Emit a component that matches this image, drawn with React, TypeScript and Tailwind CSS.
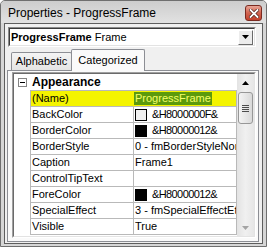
import React from 'react'

type Prop = {
    name: string
    value: string
    swatch?: 'light' | 'dark'
    selected?: boolean
}

const props: Prop[] = [
    { name: '(Name)', value: 'ProgressFrame', selected: true },
    { name: 'BackColor', value: '&H8000000F&', swatch: 'light' },
    { name: 'BorderColor', value: '&H80000012&', swatch: 'dark' },
    { name: 'BorderStyle', value: '0 - fmBorderStyleNone' },
    { name: 'Caption', value: 'Frame1' },
    { name: 'ControlTipText', value: '' },
    { name: 'ForeColor', value: '&H80000012&', swatch: 'dark' },
    { name: 'SpecialEffect', value: '3 - fmSpecialEffectEtched' },
    { name: 'Visible', value: 'True' },
]

const CloseButton = () => (
    <div className="mt-[4px] w-[17px] h-[16px] rounded-[3px] border border-[#7a2a20] bg-gradient-to-b from-[#e8a496] via-[#d0634f] to-[#c2412c] flex items-center justify-center">
        <svg width="10" height="9" viewBox="0 0 10 9">
            <path d="M1.5 1 L8.5 8 M8.5 1 L1.5 8" stroke="#4a1a14" strokeWidth="3.2" strokeLinecap="square" />
            <path d="M1.5 1 L8.5 8 M8.5 1 L1.5 8" stroke="#ffffff" strokeWidth="1.8" strokeLinecap="square" />
        </svg>
    </div>
)

const PropRow = ({ p }: { p: Prop }) => (
    <div className={`flex h-[16px] ${p.selected ? 'bg-[#f4f400]' : 'bg-white'}`}>
        <div className="w-[16px] bg-white" />
        <div className={`w-[104px] border-l border-r border-b border-[#b9b9b9] pl-[1px] leading-[15px] whitespace-nowrap overflow-hidden ${p.selected ? 'border-r-[#f4f400]' : ''}`}>
            {p.name}
        </div>
        <div className="w-[103px] border-r border-b border-[#b9b9b9] pl-[1px] flex items-center whitespace-nowrap overflow-hidden">
            {p.selected ? (
                <span className="bg-[#5c9a0c] text-[#f4ff6a] leading-[13px] px-[1px] -ml-[1px]">{p.value}</span>
            ) : (
                <>
                    {p.swatch && (
                        <span className={`w-[12px] h-[12px] border border-black mr-[5px] shrink-0 ${p.swatch === 'dark' ? 'bg-black' : 'bg-[#f0f0f0]'}`} />
                    )}
                    <span className={`leading-[15px] ${p.swatch ? 'tracking-[-0.6px]' : ''}`}>{p.value}</span>
                </>
            )}
        </div>
    </div>
)

const ScrollBar = () => (
    <div className="w-[17px] flex flex-col bg-gradient-to-r from-[#e3e3e3] via-[#f0f0f0] to-[#e6e6e6]">
        <div className="h-[17px] flex items-center justify-center">
            <svg width="7" height="4" viewBox="0 0 7 4"><path d="M3.5 0 L7 4 L0 4 Z" fill="#000" /></svg>
        </div>
        <div className="mt-[1px] mx-[1px] h-[32px] rounded-[3px] border border-[#979797] bg-gradient-to-r from-[#f4f4f4] to-[#d9d9d9] flex flex-col items-center justify-center gap-[1px]">
            {[0, 1, 2, 3].map((i) => (
                <div key={i} className="w-[7px] h-[1px] bg-[#4d4d4d]" />
            ))}
        </div>
        <div className="flex-1" />
        <div className="h-[17px] flex items-center justify-center">
            <svg width="7" height="4" viewBox="0 0 7 4"><path d="M0 0 L7 0 L3.5 4 Z" fill="#a3a3a3" /></svg>
        </div>
    </div>
)

export default function App() {
    return (
        <div className="w-[267px] h-[250px] bg-white overflow-hidden font-['Liberation_Sans',Arial,sans-serif] text-black">
            <div className="w-[267px] h-[247px] border border-[#6f6f6f] rounded-t-[5px] bg-[#d6d6d6] flex flex-col">
                {/* title bar */}
                <div className="h-[22px] flex items-start pl-[7px] pr-[4px] bg-gradient-to-b from-[#cdcdcd] to-[#e2e2e2] rounded-t-[4px]">
                    <div className="flex-1 text-[12px] leading-[22px] pt-[1px]">Properties - ProgressFrame</div>
                    <CloseButton />
                </div>

                {/* client area */}
                <div className="flex-1 px-[3px] pb-[2px]">
                    <div className="h-full border border-[#5e5e5e] bg-[#f0f0f0] flex flex-col">
                        {/* object combo */}
                        <div className="mt-[3px] ml-[3px] w-[248px] h-[20px] border border-t-[#8a8a8a] border-l-[#8a8a8a] border-r-white border-b-white">
                            <div className="h-full border border-t-[#3c3c3c] border-l-[#3c3c3c] border-r-[#e3e3e3] border-b-[#e3e3e3] bg-white flex items-center">
                                <div className="flex-1 pl-[1px] text-[11px] whitespace-nowrap">
                                    <span className="font-bold">ProgressFrame</span> Frame
                                </div>
                                <div className="w-[15px] h-[15px] mr-[1px] border border-t-white border-l-white border-r-[#6a6a6a] border-b-[#6a6a6a] bg-[#ececec] flex items-center justify-center">
                                    <svg width="7" height="4" viewBox="0 0 7 4"><path d="M0 0 L7 0 L3.5 4 Z" fill="#000" /></svg>
                                </div>
                            </div>
                        </div>

                        {/* tabs */}
                        <div className="h-[23px] flex items-end pl-[6px] text-[11px]">
                            <div className="w-[61px] h-[18px] border border-b-0 border-[#8c8e94] rounded-t-[2px] bg-gradient-to-b from-[#f4f4f4] to-[#e4e4e4] flex items-center justify-center">
                                Alphabetic
                            </div>
                            <div className="relative z-10 -ml-[1px] -mb-[1px] w-[74px] h-[22px] border border-b-0 border-[#8c8e94] rounded-t-[2px] bg-[#fafafa] flex items-start justify-center pt-[2px]">
                                Categorized
                            </div>
                        </div>

                        {/* tab page */}
                        <div className="ml-[2px] w-[252px] h-[172px] border border-[#8c8e94] bg-[#fafafa]">
                            <div className="mt-[1px] ml-[4px] w-[244px] h-[166px] border border-t-[#a0a0a0] border-l-[#a0a0a0] border-r-white border-b-white">
                                <div className="h-full border border-t-[#6a6a6a] border-l-[#6a6a6a] border-r-[#e3e3e3] border-b-[#e3e3e3] bg-white flex text-[11px]">
                                    <div className="w-[223px] flex flex-col">
                                        <div className="flex h-[17px]">
                                            <div className="w-[16px] flex items-start justify-center pt-[4px]">
                                                <div className="w-[9px] h-[9px] border border-[#848484] bg-white flex items-center justify-center">
                                                    <div className="w-[5px] h-[1px] bg-black" />
                                                </div>
                                            </div>
                                            <div className="flex-1 border-b border-[#b9b9b9] pl-[2px] font-bold text-[12px] leading-[16px]">
                                                Appearance
                                            </div>
                                        </div>
                                        {props.map((p) => (
                                            <PropRow key={p.name} p={p} />
                                        ))}
                                    </div>
                                    <ScrollBar />
                                </div>
                            </div>
                        </div>
                    </div>
                </div>
            </div>
        </div>
    )
}
